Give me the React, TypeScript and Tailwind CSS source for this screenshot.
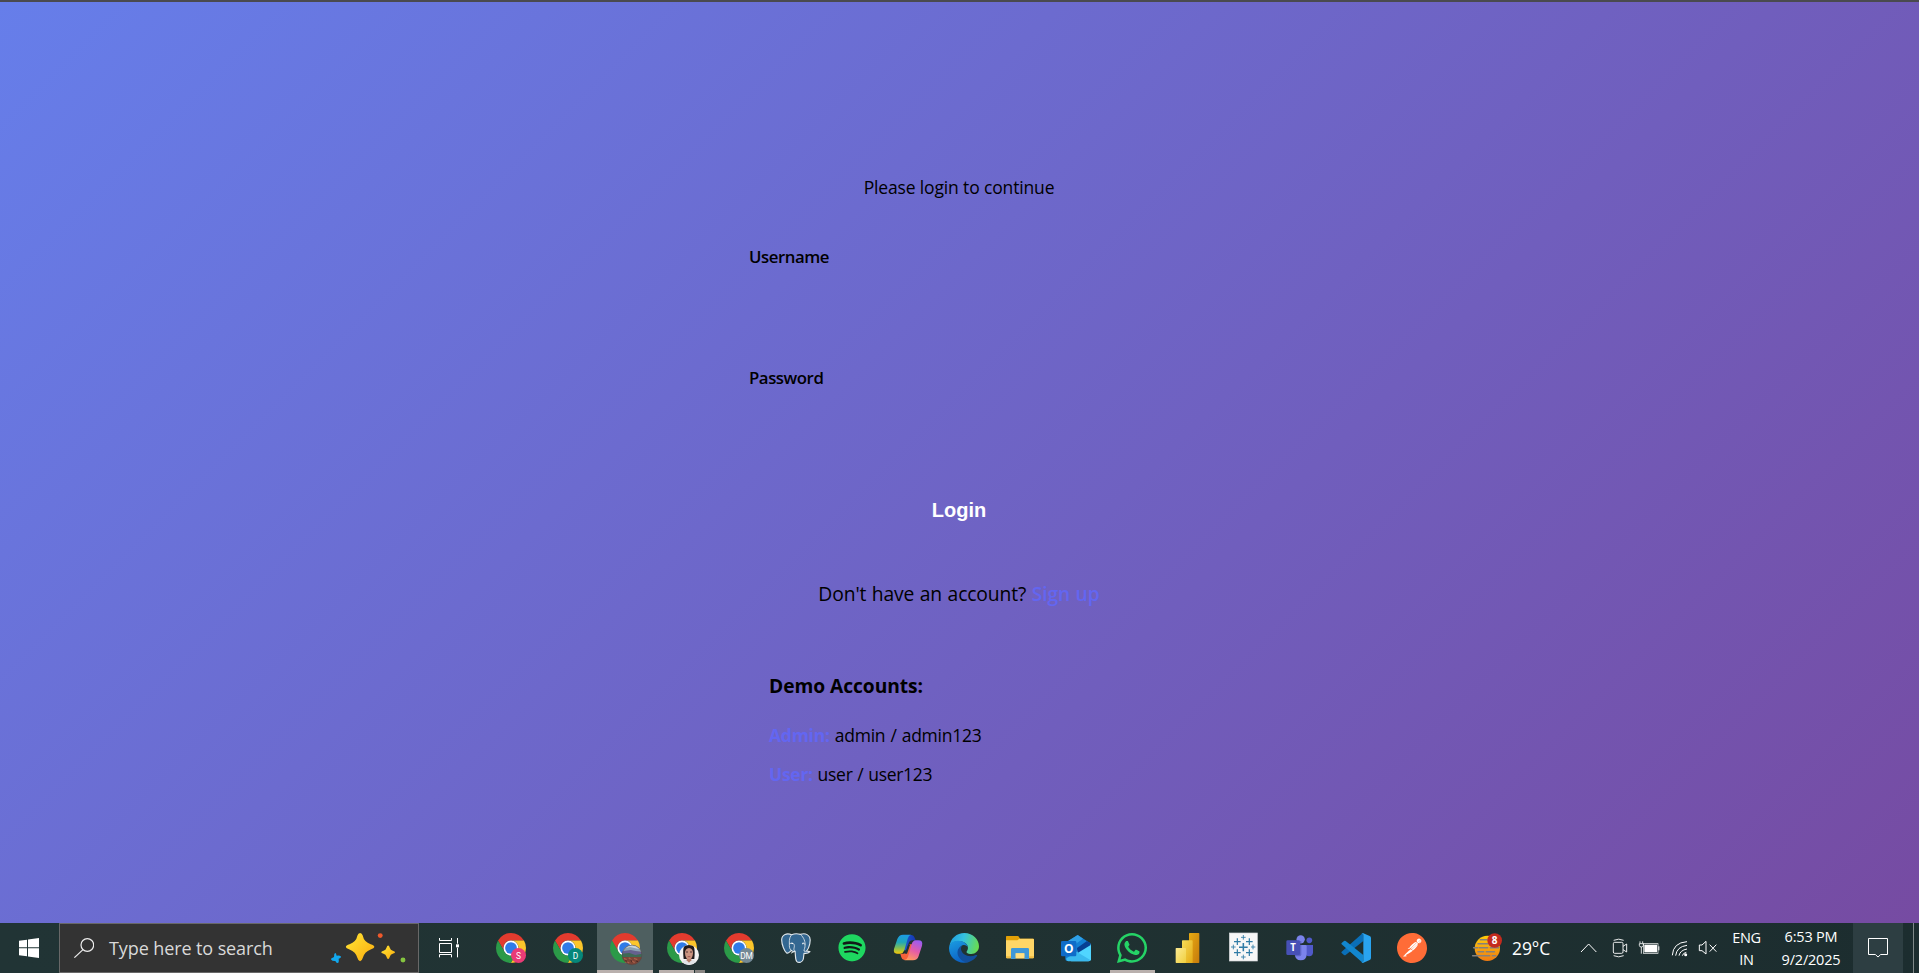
import type { ReactNode } from "react";
import { FaSpotify, FaWhatsapp } from "react-icons/fa";
import { SiPostman } from "react-icons/si";

function Icon({ children }: { children: ReactNode }) {
  return (
    <svg viewBox="0 0 90 90" className="block h-[30px] w-[30px] overflow-visible">
      {children}
    </svg>
  );
}

function ChromeMark() {
  return (
    <g transform="scale(2.045) translate(-2 -2)">
      <path fill="#e33b2e" d="M24 13H43.05A22 22 0 0 0 4.95 13L14.47 29.5A11 11 0 0 1 24 13Z" />
      <path fill="#2b9a48" d="M4.95 13A22 22 0 0 0 24 46L33.53 29.5A11 11 0 0 1 14.47 29.5Z" />
      <path fill="#fcc62b" d="M43.05 13A22 22 0 0 1 24 46L33.53 29.5A11 11 0 0 0 24 13Z" />
      <circle cx="24" cy="24" r="11" fill="#fff" />
      <circle cx="24" cy="24" r="8.6" fill="#2f7be8" />
    </g>
  );
}

function ChromeLetter({ letter, color, size }: { letter: string; color: string; size: number }) {
  return (
    <Icon>
      <ChromeMark />
      <circle cx="67.5" cy="67.5" r="22.5" fill={color} />
      <text x="67.5" y="76.5" textAnchor="middle" fontSize={size} fill="#fff" fontFamily="Roboto, sans-serif">
        {letter}
      </text>
    </Icon>
  );
}

function ChromeLandscape() {
  return (
    <Icon>
      <defs>
        <clipPath id="land">
          <circle cx="66" cy="66" r="30" />
        </clipPath>
      </defs>
      <ChromeMark />
      <g clipPath="url(#land)">
        <rect x="36" y="36" width="60" height="60" fill="#7b4436" />
        <rect x="36" y="36" width="60" height="17" fill="#c9d6de" />
        <path d="M36 48L60 42 96 50V56H36Z" fill="#8aa3b5" />
        <path d="M36 55L62 51 96 58V70H36Z" fill="#65618f" />
        <path d="M36 62L58 60 76 66 96 62V72H36Z" fill="#3e6a55" />
        <path d="M42 76l8 4M56 74l8 6M72 76l10 4M50 86l8 4M66 84l8 5" stroke="#a8604a" strokeWidth="4" />
        <path d="M46 82l6 4M62 80l4 8M78 84l6 2" stroke="#4c2c26" strokeWidth="3" />
      </g>
      <circle cx="66" cy="66" r="29.5" fill="none" stroke="#4b4b4b" strokeWidth="1.5" />
    </Icon>
  );
}

function ChromePortrait() {
  return (
    <Icon>
      <defs>
        <clipPath id="face">
          <circle cx="66" cy="66" r="30" />
        </clipPath>
      </defs>
      <ChromeMark />
      <g clipPath="url(#face)">
        <rect x="36" y="36" width="60" height="60" fill="#f4f2f1" />
        <path d="M50 78C45 34 54 36 66 36S86 34 82 78Z" fill="#211a1b" />
        <path d="M40 96Q44 82 57 80H75Q88 82 92 96Z" fill="#e2e4e8" />
        <path d="M59 70H73V82L66 89 59 82Z" fill="#b57d68" />
        <path d="M54 60Q54 46 66 45Q78 46 78 60Q77 78 66 79Q55 78 54 60Z" fill="#cb9480" />
        <path d="M57 57h6M69 57h6" stroke="#43282a" strokeWidth="2.6" />
        <path d="M62 71h8" stroke="#9a4f4b" strokeWidth="2.6" />
      </g>
    </Icon>
  );
}

function Postgres() {
  return (
    <Icon>
      <g fill="#336791" stroke="#dfe6ea" strokeWidth="3.4" strokeLinejoin="round" strokeLinecap="round">
        <path d="M32 5C18 0 3 3 2 20C2 34 10 55 17 60C22 63 26 56 31 52Q35 57 42 55C44 64 42 78 47 85C53 91 65 88 67 78L69 61C76 62 83 60 87 56C85 54 80 56 77 54C86 42 90 22 86 13C80 3 68 1 58 4Q44 0 32 5Z" />
        <path d="M32 5C22 16 26 30 25 37C25 46 28 50 31 52M58 4C70 14 73 28 72 36C73 44 69 48 69 54Q72 57 77 54M25 33C32 28 39 30 40 37C41 44 35 51 42 55M42 55L31 60M72 33Q66 30 64 32" fill="none" strokeWidth="2.6" />
      </g>
      <path d="M31 31l5 1M64 31l4-1" stroke="#fff" strokeWidth="3" />
    </Icon>
  );
}

function Spotify() {
  return (
    <Icon>
      <circle cx="45" cy="44.5" r="38" fill="#121a18" />
      <FaSpotify x="3" y="2.5" size={84} color="#1ed760" />
    </Icon>
  );
}

function Copilot() {
  return (
    <Icon>
      <defs>
        <linearGradient id="cpA" x1="0" y1="0" x2="0" y2="1">
          <stop offset="0" stopColor="#1c9be8" />
          <stop offset=".4" stopColor="#20a7b8" />
          <stop offset=".7" stopColor="#7fbf55" />
          <stop offset="1" stopColor="#f4c60b" />
        </linearGradient>
        <linearGradient id="cpB" x1=".7" y1="0" x2=".3" y2="1">
          <stop offset="0" stopColor="#9a5cf0" />
          <stop offset=".5" stopColor="#e45ba8" />
          <stop offset="1" stopColor="#ff9a5c" />
        </linearGradient>
        <linearGradient id="cpC" x1="0" y1="0" x2="1" y2="0">
          <stop offset="0" stopColor="#1d63d8" />
          <stop offset="1" stopColor="#1534b0" />
        </linearGradient>
      </defs>
      <path d="M34 6H56Q62 6 65 14L68 22H58Q50 22 47 31L40 52H26Z" fill="url(#cpC)" />
      <path d="M52 81H34Q27 81 25 73L22 62H32Q40 62 43 54L50 34H64Z" fill="#f5613a" />
      <path d="M30 5H54Q47 7 44 17L34 52Q31 61 22 62H12Q0 62 3 48L13 18Q18 5 30 5Z" fill="url(#cpA)" />
      <path d="M60 82H34Q42 80 45 71L56 34Q59 23 68 22H76Q91 22 87 38L77 69Q73 82 60 82Z" fill="url(#cpB)" />
      <path d="M45 36H51L42 62H36Z" fill="#213435" />
    </Icon>
  );
}

function Edge() {
  return (
    <Icon>
      <defs>
        <linearGradient id="edA" x1="0" y1=".3" x2="1" y2=".5">
          <stop offset="0" stopColor="#1f9ee0" />
          <stop offset=".45" stopColor="#35c1e0" />
          <stop offset="1" stopColor="#68dc50" />
        </linearGradient>
        <linearGradient id="edB" x1="0" y1="0" x2=".4" y2="1">
          <stop offset="0" stopColor="#1b9de2" />
          <stop offset="1" stopColor="#0c62c4" />
        </linearGradient>
      </defs>
      <path d="M1 42C4 15 24 0 46 0C73 0 90 20 90 40C90 54 79 63 67 63C56 63 50 59 54 54C61 44 55 31 43 27C26 20 6 27 1 42Z" fill="url(#edA)" />
      <path d="M0 46C0 31 14 22 28 23C44 23 56 33 57 44C55 38 49 35 43 36C31 39 25 54 32 67C38 80 51 87 62 86C31 98 0 76 0 46Z" fill="url(#edB)" />
      <path d="M39 38C24 44 22 62 31 74C39 85 51 90 60 87C71 83 79 77 84 69C86 66 83 65 80 66C62 75 38 66 36 48Q36 42 39 38Z" fill="#124f9c" />
    </Icon>
  );
}

function Explorer() {
  return (
    <Icon>
      <path d="M3 11Q3 9 5 9H38Q41 9 42 12L45 17H84Q87 17 87 20V30H3Z" fill="#e2a007" />
      <path d="M3 22H36Q39 22 42 17H84Q87 17 87 20V73Q87 76 84 76H6Q3 76 3 73Z" fill="#ffd667" />
      <path d="M3 70H87V73Q87 76 84 76H6Q3 76 3 73Z" fill="#f2bd42" />
      <path d="M18 78V49Q18 45 22 45H68Q72 45 72 49V78H58V61H32V78Z" fill="#3f98d8" />
      <rect x="32" y="61" width="26" height="15" fill="#ffdf83" />
    </Icon>
  );
}

function Outlook() {
  return (
    <Icon>
      <path d="M13 29L50 6 88 31V78Q88 84 82 84H20Q13 84 13 78Z" fill="#1380d4" />
      <path d="M13 29L50 6 66 17 27 45Z" fill="#2fa0e6" />
      <path d="M50 52L90 32V79Q90 85 83 85H30Z" fill="#50d5ff" />
      <path d="M48 45L78 24 88 31 89 36 50 60Z" fill="#073f93" />
      <path d="M16 76L48 57 88 81Q86 85 81 85H22Q16 85 16 76Z" fill="#3ab9ee" />
      <rect x="0" y="24" width="46" height="46" rx="4" fill="#0f6cc9" />
      <text x="23" y="60" textAnchor="middle" fontSize="36" fontWeight="700" fill="#fff" fontFamily="Open Sans, sans-serif">
        O
      </text>
    </Icon>
  );
}

function WhatsApp() {
  return (
    <Icon>
      <FaWhatsapp x="-6.500" y="-6.500" size={103} color="#25d366" />
    </Icon>
  );
}

function PowerBi() {
  return (
    <Icon>
      <defs>
        <linearGradient id="pbA" x1="0" y1="0" x2="1" y2="1">
          <stop offset="0" stopColor="#e8ab13" />
          <stop offset="1" stopColor="#c57a0c" />
        </linearGradient>
        <linearGradient id="pbB" x1="0" y1="0" x2="1" y2="1">
          <stop offset="0" stopColor="#f6dc58" />
          <stop offset="1" stopColor="#e4aa15" />
        </linearGradient>
        <linearGradient id="pbC" x1="0" y1="0" x2="1" y2="1">
          <stop offset="0" stopColor="#fcea92" />
          <stop offset="1" stopColor="#f0cf3e" />
        </linearGradient>
      </defs>
      <rect x="48" y="0" width="31" height="90" rx="2" fill="url(#pbA)" />
      <rect x="27" y="22" width="32" height="68" rx="2" fill="url(#pbB)" />
      <rect x="8" y="45" width="31" height="45" rx="2" fill="url(#pbC)" />
    </Icon>
  );
}

function Tableau() {
  return (
    <Icon>
      <rect x="1" y="0" width="84" height="84" fill="#f7f7f7" stroke="#d3d6d8" strokeWidth="2" />
      <g stroke="#2f7ba6" fill="none">
        <path strokeWidth="4.6" d="M43 30V55M30 42.500H56" />
        <path strokeWidth="3.6" d="M25 16V36M15 26H35M61 16V36M51 26H71M25 49V69M15 59H35M61 49V69M51 59H71" />
        <path strokeWidth="2.6" d="M43 6V20M36 13H50M43 65V79M36 72H50M13 35V49M6 42H20M72 35V49M66 42H79" />
      </g>
    </Icon>
  );
}

function Teams() {
  return (
    <Icon>
      <circle cx="73" cy="22" r="8.500" fill="#5059c9" />
      <path d="M60 36H84V58Q84 70 72 70Q64 70 60 63Z" fill="#5059c9" />
      <circle cx="47" cy="19" r="12.500" fill="#7b83eb" />
      <path d="M29 36H61Q65 36 65 40V62Q65 82 47 82Q31 82 29 64Z" fill="#7b83eb" />
      <path d="M45 24H49V64Q49 70 43 70H30V66Z" fill="#3b439c" opacity=".45" />
      <rect x="4" y="22" width="41" height="44" rx="4" fill="#4750b6" />
      <text x="24.500" y="54" textAnchor="middle" fontSize="29" fontWeight="700" fill="#fff" fontFamily="Open Sans, sans-serif">
        T
      </text>
    </Icon>
  );
}

function VsCode() {
  return (
    <Icon>
      <path d="M67 1L67 24 14 66Q12 68 9 66L2 60Q0 58 2 56L63 2Z" fill="#0a6fb8" />
      <path d="M67 89L67 66 14 24Q12 22 9 24L2 30Q0 32 2 34L63 88Z" fill="#1287cf" />
      <path d="M67 0.500L86 9Q90 11 90 15V75Q90 79 86 81L67 89.500Q63 91 61 88Q67 89 67 84V6Q67 1 61 2Q63 -1 67 .500Z" fill="#29a4f0" />
    </Icon>
  );
}

function Postman() {
  return (
    <Icon>
      <circle cx="45" cy="45" r="40" fill="#fff" />
      <SiPostman x="0" y="0" size={90} color="#ff6c37" />
    </Icon>
  );
}

function Start() {
  return (
    <div className="w-[59px] pt-[15px] pl-[19px]">
      <svg viewBox="0 0 60 60" className="h-5 w-5" fill="#fff">
        <path d="M0 8L24 5V28H0ZM27 4.500L60 0V28H27ZM0 31H24V55L0 52ZM27 31H60V60L27 55.500Z" />
      </svg>
    </div>
  );
}

function SearchBox() {
  return (
    <div className="flex h-[50px] w-[360px] border border-[#686868] bg-[#333333]">
      <svg viewBox="0 0 60 60" className="mt-[14px] ml-[14px] h-5 w-5" fill="none" stroke="#eee" strokeWidth="3.600">
        <circle cx="40" cy="21" r="19" />
        <path d="M27 35L1 59" />
      </svg>
      <span className="ml-[15px] w-[200px] pt-[10px] font-['Open_Sans',sans-serif] text-[18px] leading-[28px] tracking-[-0.100px] whitespace-nowrap text-[#d9d9d9]">
        Type here to search
      </span>
      <svg viewBox="0 0 240 100" className="mt-[7px] ml-[20px] h-[33px] w-[80px] overflow-visible">
        <defs>
          <linearGradient id="spark" x1="0" y1="0" x2="1" y2="1">
            <stop offset=".2" stopColor="#ffdb2e" />
            <stop offset=".8" stopColor="#fbb615" />
          </linearGradient>
        </defs>
        <path d="M93 6Q99 6 101 14Q105 34 125 40Q136 43 136 48Q136 53 125 56Q106 63 101 82Q98 92 93 92Q88 92 85 82Q80 63 61 56Q50 53 50 48Q50 43 61 40Q81 34 85 14Q87 6 93 6Z" fill="url(#spark)" />
        <path d="M178 44Q181 44 183 51Q185 58 192 60Q199 62 199 64.500Q199 67 192 69Q185 71 183 78Q181 85 178 85Q175 85 173 78Q171 71 164 69Q157 67 157 64.500Q157 62 164 60Q171 58 173 51Q175 44 178 44Z" fill="url(#spark)" />
        <path d="M17 67Q20 65 22 75Q30 73 35 77Q37 80 28 84Q30 96 25 97Q21 98 18 91Q9 92 5 86Q4 83 14 79Q14 69 17 67Z" fill="#12a8ee" />
        <circle cx="154" cy="14" r="7.500" fill="#f0592b" />
        <circle cx="223" cy="88" r="7.500" fill="#85c440" />
      </svg>
    </div>
  );
}

function TaskView() {
  return (
    <div className="w-[64px] pt-[15px] pl-5">
      <svg viewBox="0 0 60 60" className="h-5 w-5" fill="none" stroke="#fff" strokeWidth="3">
        <path d="M1.500 0V7.500H37.500V0M1.500 16.500H37.500V43.500H1.500ZM1.500 58V49.500H37.500V58M55.500 0V17M55.500 29V58" />
        <rect x="51" y="19" width="9" height="9" fill="#fff" stroke="none" />
      </svg>
    </div>
  );
}

const chromeApps: { icon: ReactNode; active?: boolean; windows?: boolean }[] = [
  { icon: <ChromeLetter letter="S" color="#e93b76" size={25} /> },
  { icon: <ChromeLetter letter="D" color="#06877a" size={25} /> },
  { icon: <ChromeLandscape />, active: true },
  { icon: <ChromePortrait />, windows: true },
  { icon: <ChromeLetter letter="DM" color="#738995" size={25} /> },
];

const apps: { icon: ReactNode; running?: boolean }[] = [
  { icon: <Postgres /> },
  { icon: <Spotify /> },
  { icon: <Copilot /> },
  { icon: <Edge /> },
  { icon: <Explorer /> },
  { icon: <Outlook /> },
  { icon: <WhatsApp />, running: true },
  { icon: <PowerBi /> },
  { icon: <Tableau /> },
  { icon: <Teams /> },
  { icon: <VsCode /> },
  { icon: <Postman /> },
];

function Weather() {
  return (
    <div className="flex w-[113px]">
      <svg viewBox="0 0 90 90" className="mt-[10px] h-[30px] w-[30px] overflow-visible">
        <defs>
          <linearGradient id="sun" x1="0" y1="0" x2="0" y2="1">
            <stop offset="0" stopColor="#ffce0a" />
            <stop offset="1" stopColor="#ee7a12" />
          </linearGradient>
        </defs>
        <circle cx="49" cy="46" r="38" fill="url(#sun)" />
        <path d="M28 20H48M21 32H60M8 44H20M25 44H50M58 44H83M21 56H38M46 56H70M5 68H56M64 68H74" stroke="#85807c" strokeWidth="4.600" strokeLinecap="round" />
        <circle cx="71" cy="22.500" r="22" fill="#c42b1e" />
        <text x="71" y="33" textAnchor="middle" fontSize="30" fontWeight="700" fill="#fff" fontFamily="Open Sans, sans-serif">
          8
        </text>
      </svg>
      <span className="ml-[11px] pt-[11px] font-['Open_Sans',sans-serif] text-[17.500px] leading-[28px] tracking-[-0.100px] text-white">
        29°C
      </span>
    </div>
  );
}

function Tray() {
  return (
    <svg viewBox="0 0 450 150" className="h-[50px] w-[150px]" fill="none" stroke="#fff" strokeWidth="3">
      <path d="M24 87L47 63 70 87" />
      <path d="M125 58H146Q150 58 150 62V87Q150 91 146 91H125Q121 91 121 87V62Q121 58 125 58ZM150 70L161 63V87L150 80M122 52Q137 45 152 52M122 98Q137 105 152 98" strokeWidth="2.700" />
      <g>
        <rect x="211" y="62" width="44" height="29" strokeWidth="2" />
        <rect x="214" y="65" width="38" height="23" fill="#fff" stroke="none" />
        <rect x="256" y="70" width="3" height="12" fill="#fff" stroke="none" />
        <path d="M201 55V61M209 55V61M199 62H211V67Q211 72 205 72Q199 72 199 67ZM205 72V92" strokeWidth="2.500" />
      </g>
      <g strokeWidth="3">
        <path d="M298 97Q300 59 342 56" />
        <path d="M308 98Q311 71 342 67" />
        <path d="M318 98Q321 82 342 78" />
        <path d="M328 98Q330 90 340 88" />
        <circle cx="338" cy="95" r="4.500" fill="#fff" stroke="none" />
      </g>
      <path d="M379 66H387L399 55V93L387 83H379ZM410 65L430 86M430 65L410 86" />
    </svg>
  );
}

function Taskbar() {
  return (
    <footer className="flex h-[50px] w-full bg-linear-to-r from-[#213435] via-[#203232] to-[#1c2d2f]">
      <Start />
      <SearchBox />
      <TaskView />
      {chromeApps.map((app, i) => (
        <div key={i} className="w-[57px]">
          <div className={app.active ? "flex h-[50px] w-[56px] flex-col justify-between bg-[#4e5f60]" : "flex h-[50px] w-[56px] flex-col justify-between"}>
            <div className="flex justify-center pt-[10px]">{app.icon}</div>
            {app.active && <div className="h-[3px] w-full bg-[#b9b0ad]" />}
            {app.windows && (
              <div className="ml-[5px] flex h-[3px] gap-px">
                <div className="w-[35px] bg-[#b9b0ad]" />
                <div className="w-[10px] bg-[#888583]" />
              </div>
            )}
          </div>
        </div>
      ))}
      {apps.map((app, i) => (
        <div key={i} className="flex w-[56px] flex-col justify-between">
          <div className="flex justify-center pt-[10px]">{app.icon}</div>
          {app.running && <div className="ml-[6px] h-[3px] w-[45px] bg-[#b9b0ad]" />}
        </div>
      ))}
      <div className="w-[31px]" />
      <Weather />
      <div className="-ml-[11px] w-[151px]">
        <Tray />
      </div>
      <div className="w-[45px] pt-[4px] text-center font-['Open_Sans',sans-serif] text-[14.500px] leading-[22px] tracking-[-0.300px] text-white">
        <div>ENG</div>
        <div>IN</div>
      </div>
      <div className="w-[84px] pt-[2px] text-center font-['Open_Sans',sans-serif] text-[14.500px] leading-[23px] tracking-[-0.200px] whitespace-nowrap text-white">
        <div>6:53 PM</div>
        <div>9/2/2025</div>
      </div>
      <div className="flex w-[50px] justify-center bg-[#2d3e42] pt-[15px]">
        <svg viewBox="0 0 60 60" className="h-5 w-5 overflow-visible" fill="none" stroke="#fff" strokeWidth="3">
          <path d="M1.500 1.500H58.500V49.500H38L30 57 22 49.500H1.500Z" />
        </svg>
      </div>
      <div className="ml-[10px] w-px bg-[#7f8889]" />
    </footer>
  );
}

export default function App() {
  return (
    <div className="flex h-[973px] w-[1919px] flex-col overflow-hidden">
      <div className="h-[2px] bg-[#4a4a4f]" />
      <main className="flex flex-1 justify-center bg-[linear-gradient(135deg,#667eea_0%,#764ba2_100%)] pt-[173px] font-['Open_Sans',sans-serif] leading-6 whitespace-nowrap text-black">
        <div className="flex w-[420px] flex-col">
          <p className="-ml-px h-6 text-center text-[17.500px] tracking-[-0.150px]">Please login to continue</p>
          <label className="mt-[46px] -ml-[0.500px] h-6 text-[16.800px] font-semibold tracking-[-0.450px]">Username</label>
          <label className="mt-[97px] -ml-[0.500px] h-6 text-[16.800px] font-semibold tracking-[-0.450px]">Password</label>
          <button className="mt-[108px] -ml-px h-6 text-center font-['Liberation_Sans',sans-serif] text-[20px] leading-6 font-bold text-white">
            Login
          </button>
          <p className="mt-[60px] -ml-px h-6 text-center text-[19.300px] tracking-[-0.120px] [word-spacing:0.600px]">
            Don't have an account? <a className="font-semibold text-[#6366f1]">Sign up</a>
          </p>
          <section className="mt-[68px] px-[19.500px]">
            <h4 className="h-6 text-[19.200px] font-bold tracking-[-0.050px]">Demo Accounts:</h4>
            <p className="mt-[25px] h-6 text-[17.500px] tracking-[-0.250px] [word-spacing:0.800px]">
              <strong className="font-bold text-[#6366f1]">Admin:</strong> admin / admin123
            </p>
            <p className="mt-[15px] h-6 text-[17.500px] tracking-[-0.280px] [word-spacing:0.500px]">
              <strong className="font-bold text-[#6366f1]">User:</strong> user / user123
            </p>
          </section>
        </div>
      </main>
      <Taskbar />
    </div>
  );
}
